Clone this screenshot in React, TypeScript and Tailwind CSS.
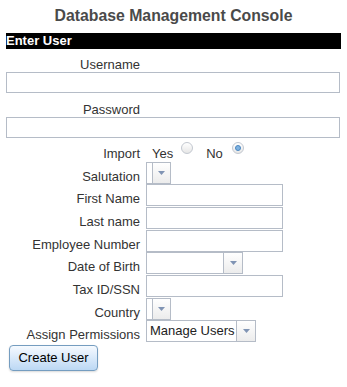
import type { ReactNode } from 'react';

function Arrow() {
  return (
    <svg width="7" height="4" viewBox="0 0 7 4">
      <path d="M0 0 H7 L3.5 4 Z" fill="#8094b4" />
    </svg>
  );
}

function Select({ width, arrow = 'w-[19px]', value }: { width: string; arrow?: string; value?: string }) {
  return (
    <div className={`flex h-[22px] border border-[#b5bcc7] bg-white ${width}`}>
      <div className="flex-1 overflow-hidden whitespace-nowrap pl-[3px] leading-[20px] text-[#222]">{value}</div>
      <div className={`flex items-center justify-center border-l border-[#b5bcc7] bg-linear-to-b from-white to-[#ececec] ${arrow}`}>
        <Arrow />
      </div>
    </div>
  );
}

function TextBox({ width, height = 'h-[22px]', type = 'text' }: { width: string; height?: string; type?: string }) {
  return <input type={type} className={`border border-[#b5bcc7] bg-white outline-none ${height} ${width}`} />;
}

function Radio({ checked }: { checked?: boolean }) {
  return (
    <span className="flex h-[12px] w-[12px] items-center justify-center rounded-full border border-[#c3c8d0] bg-linear-to-b from-white to-[#e6e6e6]">
      {checked && <span className="h-[6px] w-[6px] rounded-full border border-[#4a86c0] bg-[#7eb2e0]" />}
    </span>
  );
}

function Row({ label, children }: { label: string; children: ReactNode }) {
  return (
    <div className="flex h-[22.67px] items-end">
      <div className="mr-[6px] w-[134px] text-right leading-[15px]">{label}</div>
      {children}
    </div>
  );
}

export default function App() {
  return (
    <div className="h-[387px] w-[347px] bg-white px-[6px] pt-[7px] font-['Liberation_Sans',Arial,sans-serif] text-[13px] text-[#333]">
      <h3 className="text-center text-[15.8px] font-bold leading-[18px] text-[#4a4a4a]">Database Management Console</h3>

      <div className="mt-[8px] h-[16px] bg-black text-[13px] font-bold leading-[16px] text-white">Enter User</div>

      <div className="mt-[8px] w-[134px] text-right leading-[15px]">Username</div>
      <TextBox width="w-[334px]" height="h-[21px]" />
      <div className="mt-[9px] w-[134px] text-right leading-[15px]">Password</div>
      <TextBox width="w-[334px]" height="h-[21px]" type="password" />

      <div className="flex h-[23px] items-end">
        <div className="mr-[6px] w-[134px] text-right leading-[15px]">Import</div>
        <span className="ml-[6px] leading-[15px]">Yes</span>
        <span className="ml-[8px] self-start pt-[4px]">
          <Radio />
        </span>
        <span className="ml-[13px] leading-[15px]">No</span>
        <span className="ml-[9px] self-start pt-[4px]">
          <Radio checked />
        </span>
      </div>

      <Row label="Salutation">
        <Select width="w-[25px]" arrow="w-[18px]" />
      </Row>
      <Row label="First Name">
        <TextBox width="w-[137px]" />
      </Row>
      <Row label="Last name">
        <TextBox width="w-[137px]" />
      </Row>
      <Row label="Employee Number">
        <TextBox width="w-[137px]" />
      </Row>
      <Row label="Date of Birth">
        <Select width="w-[97px]" />
      </Row>
      <Row label="Tax ID/SSN">
        <TextBox width="w-[137px]" />
      </Row>
      <Row label="Country">
        <Select width="w-[25px]" arrow="w-[18px]" />
      </Row>
      <Row label="Assign Permissions">
        <Select width="w-[110px]" value="Manage Users" />
      </Row>

      <button className="ml-[3px] mt-[3px] h-[26px] w-[89px] rounded-[4px] border border-[#759dc0] bg-linear-to-b from-[#f6faff] to-[#bcd8f4] text-[13px] leading-[24px] text-black shadow-[0_1px_2px_rgba(0,0,0,0.15)]">
        Create User
      </button>
    </div>
  );
}
